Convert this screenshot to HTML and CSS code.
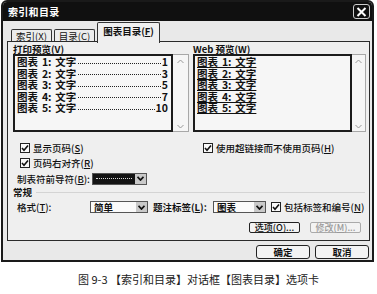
FILE: index.html
```html
<!DOCTYPE html>
<html lang="zh-CN">
<head>
    <meta charset="UTF-8">
    <title>索引和目录</title>
    <link rel="stylesheet" href="styles.css">
</head>
<body>
    <div class="dialog">
        <div class="titlebar">
            <span class="title">索引和目录</span>
            <span class="close">
                <svg width="11" height="10" viewBox="0 0 11 10"><path d="M1.5 1 L9.5 9 M9.5 1 L1.5 9" stroke="#fff" stroke-width="2"/></svg>
            </span>
        </div>

        <div class="tabs">
            <div class="tab">索引(<u>X</u>)</div>
            <div class="tab">目录(<u>C</u>)</div>
            <div class="tab active">图表目录(<u>F</u>)</div>
        </div>

        <div class="panel">
            <div class="previews">
                <div class="col">
                    <div class="label">打印预览(<u>V</u>)</div>
                    <div class="listbox">
                        <div class="list">
                            <div class="row"><span class="entry">图表 1: 文字</span><span class="leader"></span><span class="page">1</span></div>
                            <div class="row"><span class="entry">图表 2: 文字</span><span class="leader"></span><span class="page">3</span></div>
                            <div class="row"><span class="entry">图表 3: 文字</span><span class="leader"></span><span class="page">5</span></div>
                            <div class="row"><span class="entry">图表 4: 文字</span><span class="leader"></span><span class="page">7</span></div>
                            <div class="row"><span class="entry">图表 5: 文字</span><span class="leader"></span><span class="page">10</span></div>
                        </div>
                        <div class="scroll">
                            <svg width="7" height="5" viewBox="0 0 7 5"><path d="M0.5 4 L3.5 1 L6.5 4" fill="none" stroke="#999"/></svg>
                            <svg width="7" height="5" viewBox="0 0 7 5"><path d="M0.5 1 L3.5 4 L6.5 1" fill="none" stroke="#999"/></svg>
                        </div>
                    </div>
                    <label class="check first"><span class="box"><svg width="8" height="8" viewBox="0 0 8 8"><path d="M1 4 L3 6.2 L7 1.5" fill="none" stroke="#111" stroke-width="1.6"/></svg></span>显示页码(<u>S</u>)</label>
                    <label class="check"><span class="box"><svg width="8" height="8" viewBox="0 0 8 8"><path d="M1 4 L3 6.2 L7 1.5" fill="none" stroke="#111" stroke-width="1.6"/></svg></span>页码右对齐(<u>R</u>)</label>
                    <div class="leader-row">
                        <span class="field-label">制表符前导符(<u>B</u>):</span>
                        <div class="select dark">
                            <span class="value"><span class="dots"></span></span>
                            <span class="arrow"><svg width="7" height="5" viewBox="0 0 7 5"><path d="M0.5 0.8 L3.5 4 L6.5 0.8" fill="none" stroke="#111" stroke-width="1.8"/></svg></span>
                        </div>
                    </div>
                </div>

                <div class="col">
                    <div class="label">Web 预览(<u>W</u>)</div>
                    <div class="listbox">
                        <div class="list web">
                            <div class="row"><span class="link">图表 1: 文字</span></div>
                            <div class="row"><span class="link">图表 2: 文字</span></div>
                            <div class="row"><span class="link">图表 3: 文字</span></div>
                            <div class="row"><span class="link">图表 4: 文字</span></div>
                            <div class="row"><span class="link">图表 5: 文字</span></div>
                        </div>
                        <div class="scroll">
                            <svg width="7" height="5" viewBox="0 0 7 5"><path d="M0.5 4 L3.5 1 L6.5 4" fill="none" stroke="#999"/></svg>
                            <svg width="7" height="5" viewBox="0 0 7 5"><path d="M0.5 1 L3.5 4 L6.5 1" fill="none" stroke="#999"/></svg>
                        </div>
                    </div>
                    <label class="check first web-check"><span class="box"><svg width="8" height="8" viewBox="0 0 8 8"><path d="M1 4 L3 6.2 L7 1.5" fill="none" stroke="#111" stroke-width="1.6"/></svg></span>使用超链接而不使用页码(<u>H</u>)</label>
                </div>
            </div>

            <div class="group">
                <span class="group-title">常规</span>
                <span class="group-line"></span>
            </div>

            <div class="format-row">
                <span class="field-label fmt">格式(<u>T</u>):</span>
                <div class="select style">
                    <span class="value">简单</span>
                    <span class="arrow"><svg width="7" height="5" viewBox="0 0 7 5"><path d="M0.5 0.8 L3.5 4 L6.5 0.8" fill="none" stroke="#111" stroke-width="1.8"/></svg></span>
                </div>
                <span class="field-label caption-label">题注标签(<u>L</u>):</span>
                <div class="select tag">
                    <span class="value">图表</span>
                    <span class="arrow"><svg width="7" height="5" viewBox="0 0 7 5"><path d="M0.5 0.8 L3.5 4 L6.5 0.8" fill="none" stroke="#111" stroke-width="1.8"/></svg></span>
                </div>
                <label class="check inline"><span class="box"><svg width="8" height="8" viewBox="0 0 8 8"><path d="M1 4 L3 6.2 L7 1.5" fill="none" stroke="#111" stroke-width="1.6"/></svg></span>包括标签和编号(<u>N</u>)</label>
            </div>

            <div class="option-row">
                <button class="small-btn">选项(<u>O</u>)...</button>
                <button class="small-btn disabled">修改(<u>M</u>)...</button>
            </div>
        </div>

        <div class="footer">
            <button class="btn default">确定</button>
            <button class="btn">取消</button>
        </div>
    </div>

    <p class="caption">图 9-3 【索引和目录】对话框【图表目录】选项卡</p>
</body>
</html>
```

FILE: styles.css
```css
* {
    box-sizing: border-box;
}
body {
    margin: 0;
    background: #fff;
    color: #111;
    font-family: "Noto Sans CJK SC", "Liberation Sans", sans-serif;
    font-size: 9.5px;
}
u {
    text-decoration: underline;
}
.dialog {
    width: 373px;
    height: 262px;
    margin-left: 1px;
    border: 2px solid #1a1a1a;
    border-radius: 6px 6px 0 0;
    background: #e9e9e9;
    display: flex;
    flex-direction: column;
}
.titlebar {
    height: 19px;
    background: #101010;
    color: #fff;
    display: flex;
    align-items: center;
    justify-content: space-between;
    padding: 0 2px 0 5px;
    border-radius: 4px 4px 0 0;
}
.title {
    font-size: 10px;
    font-weight: 700;
    letter-spacing: 0.3px;
}
.close {
    width: 17px;
    height: 15px;
    border: 1px solid #ccc;
    border-radius: 3px;
    display: flex;
    align-items: center;
    justify-content: center;
}
.tabs {
    height: 21px;
    display: flex;
    align-items: flex-end;
    padding-left: 8px;
}
.tab {
    width: 41px;
    height: 13px;
    margin-right: 2px;
    border: 1px solid #333;
    border-bottom: none;
    border-radius: 2px 2px 0 0;
    background: #ececec;
    font-size: 9.5px;
    line-height: 12px;
    text-align: center;
}
.tab.active {
    position: relative;
    z-index: 1;
    width: 63px;
    height: 21px;
    margin-bottom: -1px;
    margin-right: 0;
    font-weight: 700;
    line-height: 17px;
    background: #efefef;
}
.panel {
    height: 200px;
    margin: -1px 2px 0 4px;
    border: 1px solid #2a2a2a;
    background: #efefef;
    padding: 2px 0 0 5px;
}
.previews {
    display: grid;
    grid-template-columns: 176px 173px;
    column-gap: 4px;
}
.label {
    height: 10px;
    line-height: 10px;
    font-weight: 700;
}
.listbox {
    height: 78px;
    display: flex;
    border: 1px solid #a8a8a8;
    border-left: none;
    background: #f6f6f6;
}
.list {
    width: 160px;
    border: 2px solid #1c1c1c;
    margin: -1px 0 -1px 0;
    padding: 0 3px 0 2px;
}
.list.web {
    width: 159px;
}
.scroll {
    flex: 1;
    display: flex;
    flex-direction: column;
    justify-content: space-between;
    align-items: center;
    padding: 4px 0 2px;
}
.row {
    display: flex;
    align-items: center;
    height: 11.5px;
    line-height: 11px;
    font-size: 10.5px;
    font-weight: 700;
    white-space: nowrap;
}
.entry, .link {
    word-spacing: 1.5px;
}
.link {
    text-decoration: underline;
    text-underline-offset: 1px;
}
.leader {
    flex: 1;
    height: 1px;
    margin: 3px 1px 0 2px;
    border-bottom: 1px dotted #222;
}
.page {
    font-size: 10.5px;
}
.check {
    display: flex;
    align-items: center;
    height: 12px;
    margin-top: 3px;
    padding-left: 7px;
    font-weight: 500;
}
.check.first {
    margin-top: 10px;
}
.check.web-check {
    padding-left: 10px;
}
.box {
    width: 10px;
    height: 10px;
    margin-right: 3px;
    border: 1px solid #222;
    background: #fafafa;
    display: flex;
    align-items: center;
    justify-content: center;
}
.leader-row {
    display: flex;
    align-items: center;
    height: 13px;
    margin-top: 3px;
    padding-left: 4px;
}
.field-label {
    width: 75px;
    font-weight: 500;
}
.select {
    height: 12px;
    display: flex;
    border: 1px solid #555;
    background: #fafafa;
}
.select .value {
    flex: 1;
    padding-left: 3px;
    line-height: 10px;
    font-weight: 700;
}
.select .arrow {
    width: 11px;
    display: flex;
    align-items: center;
    justify-content: center;
    background: #c9c9c9;
}
.select.dark {
    width: 55px;
}
.select.dark .value {
    background: #141414;
    padding: 4px 3px 0;
}
.dots {
    display: block;
    border-top: 1px dotted #ddd;
}
.group {
    display: flex;
    align-items: center;
    height: 10px;
    margin-top: 2px;
}
.group-title {
    font-weight: 700;
    margin-right: 4px;
}
.group-line {
    flex: 1;
    margin-right: 4px;
    border-top: 1px solid #d4d4d4;
}
.format-row {
    display: flex;
    align-items: center;
    height: 12px;
    margin-top: 4px;
    padding-left: 4px;
}
.field-label.fmt {
    width: 73px;
}
.select.style {
    width: 58px;
}
.field-label.caption-label {
    width: 60px;
    margin-left: 5px;
    font-weight: 700;
}
.select.tag {
    width: 53px;
}
.check.inline {
    margin: 0 0 0 5px;
    padding: 0;
}
.option-row {
    display: flex;
    justify-content: flex-end;
    gap: 10px;
    margin: 9px 8px 0 0;
}
.small-btn {
    width: 51px;
    height: 11px;
    padding: 0;
    border: 1px solid #222;
    border-radius: 2px;
    background: #f3f3f3;
    font: 500 9px/9px "Noto Sans CJK SC", sans-serif;
    color: #111;
}
.small-btn.disabled {
    border-color: #aaa;
    color: #999;
}
.footer {
    display: flex;
    justify-content: flex-end;
    gap: 5px;
    margin: 4px 3px 0 0;
}
.btn {
    width: 54px;
    height: 14px;
    padding: 0;
    border: 1px solid #222;
    border-radius: 3px;
    background: #f3f3f3;
    font: 700 9.5px/12px "Noto Sans CJK SC", sans-serif;
    color: #111;
}
.btn.default {
    border-width: 1.5px;
}
.caption {
    margin: 9px 0 0 20px;
    text-align: center;
    font-size: 11px;
    color: #222;
}
```
